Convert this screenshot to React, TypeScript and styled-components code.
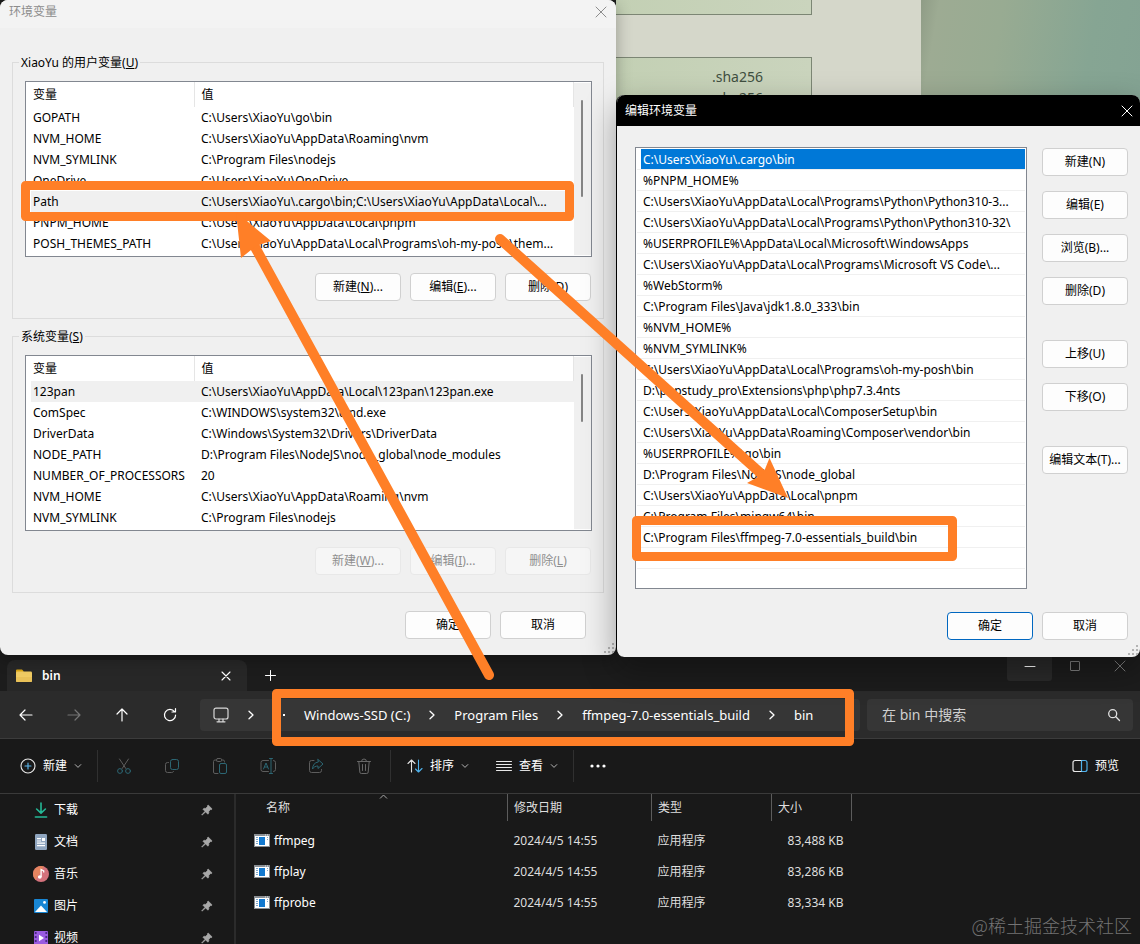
import React from "react";
import styled, { createGlobalStyle, css } from "styled-components";

const GlobalStyle = createGlobalStyle`
  *, *::before, *::after { box-sizing: border-box; }
  body {
    margin: 0;
    background: #191919;
    font-family: "Noto Sans", "Noto Sans CJK SC", sans-serif;
    font-size: 12px;
    line-height: 16px;
    color: #000;
  }
  button, input, legend, table { font: inherit; }
`;

const Desktop = styled.div`
  position: relative;
  display: flex;
  flex-direction: column;
  height: 100vh;
  overflow: hidden;
  background: #1c1c1c;
`;

const Workspace = styled.div`
  flex: none;
  display: grid;
  grid-template-columns: minmax(0, 616fr) minmax(0, 524fr);
  align-items: start;
`;

/* ---------- dialogs ---------- */

const Dialog = styled.section`
  display: flex;
  flex-direction: column;
  border-radius: 8px;
  background: #f0f0f0;
`;

const VariablesDialog = styled(Dialog)`
  position: relative;
  z-index: 1;
  box-shadow: 0 4px 16px rgba(0, 0, 0, 0.3);
`;

const EditDialog = styled(Dialog)`
  position: relative;
  z-index: 2;
  margin-top: -8px;
  border-left: 1px solid #000;
  box-shadow: 0 12px 32px rgba(0, 0, 0, 0.35);
`;

const TitleBar = styled.header<{ $dark?: boolean }>`
  display: flex;
  align-items: center;
  justify-content: space-between;
  border-radius: 8px 8px 0 0;
  ${(p) =>
    p.$dark
      ? css`
          height: 31px;
          padding: 0 7px 0 8px;
          background: #000;
          color: #fff;
        `
      : css`
          height: 28px;
          padding: 0 9px 4px;
          background: #f3f3f3;
          color: #8c8c8c;
        `}
`;

const DialogTitle = styled.h2`
  margin: 0;
  font-size: 12px;
  font-weight: 400;
  line-height: 16px;
`;

const PlainButton = styled.button`
  display: flex;
  align-items: center;
  justify-content: center;
  padding: 0;
  border: 0;
  background: none;
  color: inherit;
`;

const VariablesBody = styled.div`
  display: flex;
  flex-direction: column;
  gap: 9px;
  padding: 26px 12px 0;
`;

const Group = styled.fieldset`
  min-width: 0;
  margin: 0;
  padding: 10px 11px 17px 12px;
  border: 1px solid #dcdcdc;
`;

const GroupLabel = styled.legend`
  margin-left: -6px;
  padding: 1px 2px 0;
  line-height: 16px;
`;

const ListFrame = styled.div`
  display: flex;
  height: 176px;
  padding-left: 5px;
  border: 1px solid #828790;
  background: #fff;
  overflow: hidden;
`;

const VariableTable = styled.table`
  flex: 1;
  min-width: 0;
  align-self: flex-start;
  table-layout: fixed;
  border-collapse: collapse;

  th, td {
    padding: 0 0 0 2px;
    font-weight: 400;
    text-align: left;
    white-space: nowrap;
    overflow: hidden;
  }
  th { height: 25px; border-right: 1px solid #e5e5e5; }
  td { height: 21px; }
  th:first-child { width: 163px; }
  th + th, td + td { padding-left: 7px; }
`;

const VariableRow = styled.tr<{ $selected?: boolean }>`
  background: ${(p) => (p.$selected ? "#f0f0f0" : "transparent")};
`;

const ScrollTrack = styled.div`
  flex: none;
  width: 17px;
  margin: 1px 0;
  padding: 17px 7px;
  background: #f0f0f0;
`;

const ScrollThumb = styled.div<{ $length: number }>`
  width: 2px;
  height: ${(p) => p.$length}px;
  border-radius: 1px;
  background: #858585;
`;

const ButtonRow = styled.div`
  display: flex;
  justify-content: flex-end;
  gap: 9px;
  margin-top: 16px;
  padding-right: 1px;
`;

const DialogFooter = styled.footer<{ $inset: number }>`
  display: flex;
  justify-content: flex-end;
  gap: 9px;
  padding: 18px ${(p) => p.$inset}px 16px;
`;

const EditFooter = styled(DialogFooter)`
  padding-top: 23px;
  padding-bottom: 17px;
`;

const PushButton = styled.button<{ $primary?: boolean; $apart?: boolean }>`
  flex: none;
  width: 86px;
  height: 28px;
  margin-top: ${(p) => (p.$apart ? 20 : 0)}px;
  padding: 0;
  border: 1px solid ${(p) => (p.$primary ? "#0067c0" : "#d0d0d0")};
  border-radius: 4px;
  background: #fdfdfd;
  color: #000;
  white-space: nowrap;

  &:disabled {
    border-color: #e8e8e8;
    background: #f6f6f6;
    color: #8f8f8f;
  }
`;

const Grip = styled.svg`
  position: absolute;
  right: 2px;
  bottom: 2px;
`;

const EditBody = styled.div`
  display: flex;
  align-items: flex-start;
  gap: 15px;
  padding: 21px 12px 0 18px;
`;

const PathList = styled.ul`
  flex: 1;
  min-width: 0;
  height: 442px;
  margin: 0;
  padding: 1px;
  border: 1px solid #828790;
  background: #fff;
  list-style: none;
`;

const PathItem = styled.li<{ $selected?: boolean }>`
  height: 21px;
  padding-left: 4px;
  border-bottom: 1px solid #f0f0f0;
  line-height: 22px;
  white-space: nowrap;

  span {
    display: block;
    height: 20px;
    padding-left: 2px;
    background: ${(p) => (p.$selected ? "#0078d7" : "transparent")};
    color: ${(p) => (p.$selected ? "#fff" : "#000")};
  }
`;

const SideButtons = styled.div`
  display: flex;
  flex-direction: column;
  gap: 15px;
  padding-top: 1px;
`;

/* ---------- page behind the dialogs ---------- */

const Behind = styled.div`
  display: flex;
  height: 103px;
`;

const WebPage = styled.div`
  width: 305px;
  overflow: hidden;
  background: #d5d7ca;
`;

const Wallpaper = styled.div`
  flex: 1;
  background: linear-gradient(100deg, #8f9c86 0, #9dab93 8%, #98ab92 35%, #86a593 75%, #84a393 100%);
`;

const PagePanel = styled.div<{ $first?: boolean }>`
  width: 196px;
  height: ${(p) => (p.$first ? 15 : 60)}px;
  margin-bottom: 42px;
  padding: ${(p) => (p.$first ? 0 : 8)}px 48px 0;
  border: 1px solid #7c8674;
  border-width: ${(p) => (p.$first ? "0 1px 1px 0" : "1px 1px 0 0")};
  background: linear-gradient(90deg, #c3d0b4, #cad4bd);
  color: #3f4f40;
  font-size: 14px;
  line-height: 21px;
  text-align: right;
`;

/* ---------- file explorer ---------- */

const Explorer = styled.section`
  flex: 1;
  min-height: 240px;
  display: flex;
  flex-direction: column;
  color: #fff;
`;

const TabStrip = styled.header`
  flex: none;
  display: flex;
  align-items: flex-end;
  height: 34px;
  padding-left: 7px;
`;

const Tab = styled.div`
  display: flex;
  align-items: center;
  width: 240px;
  height: 31px;
  padding: 0 16px 0 9px;
  border-radius: 8px 8px 0 0;
  background: #272727;
  font-weight: 600;

  span { flex: 1; padding-left: 10px; }
`;

const NewTab = styled(PlainButton)`
  width: 46px;
  height: 31px;
`;

const WindowControls = styled.div`
  display: flex;
  align-self: flex-start;
  margin-left: auto;
  margin-right: -2px;
`;

const WindowButton = styled(PlainButton)<{ $active?: boolean }>`
  width: 45px;
  height: 24px;
  padding-bottom: 6px;
  border-radius: 0 0 3px 3px;
  background: ${(p) => (p.$active ? "#2a2a2a" : "transparent")};
  color: ${(p) => (p.$active ? "#fff" : "#7d7d7d")};
`;

const NavBar = styled.div`
  flex: none;
  display: flex;
  align-items: center;
  height: 48px;
  padding: 0 7px 0 2px;
  border-bottom: 1px solid #3c3c3c;
  background: #2b2b2b;
`;

const NavButtons = styled.div`
  flex: none;
  display: flex;
  width: 198px;
`;

const NavButton = styled(PlainButton)`
  width: 48px;
  height: 32px;

  &:disabled { color: #757575; }
`;

const Address = styled.nav`
  flex: 1;
  min-width: 0;
  display: flex;
  align-items: center;
  gap: 17px;
  height: 32px;
  margin-right: 7px;
  padding-left: 13px;
  border-radius: 4px;
  background: #363636;
  font-size: 13px;
`;

const Crumb = styled(PlainButton)`
  white-space: nowrap;
`;

const SearchBox = styled.label`
  flex: none;
  display: flex;
  align-items: center;
  width: 266px;
  height: 32px;
  padding: 0 12px 0 15px;
  border-radius: 4px;
  background: #363636;
`;

const SearchInput = styled.input`
  flex: 1;
  min-width: 0;
  padding: 0;
  border: 0;
  outline: 0;
  background: none;
  color: #fff;
  font-size: 14px;

  &::placeholder { color: #cfcfcf; opacity: 1; }
`;

const CommandBar = styled.div`
  flex: none;
  display: flex;
  align-items: center;
  height: 55px;
  padding: 0 21px 0 20px;
  border-bottom: 1px solid #3a3a3a;
  background: #191919;
`;

const Command = styled(PlainButton)<{ $width?: number; $end?: boolean }>`
  flex: none;
  justify-content: flex-start;
  gap: 7px;
  width: ${(p) => (p.$width ? p.$width + "px" : "auto")};
  height: 32px;
  margin-left: ${(p) => (p.$end ? "auto" : 0)};
  white-space: nowrap;
`;

const IconCommand = styled(PlainButton)`
  flex: none;
  width: 48px;
  height: 32px;
`;

const Divider = styled.div<{ $before?: number; $after?: number }>`
  flex: none;
  width: 1px;
  height: 32px;
  margin: 0 ${(p) => p.$after ?? 0}px 0 ${(p) => p.$before ?? 0}px;
  background: #303030;
`;

const ExplorerBody = styled.div`
  flex: 1;
  min-height: 0;
  display: flex;
  overflow: hidden;
  background: #191919;
`;

const Sidebar = styled.nav`
  flex: none;
  width: 236px;
  border-right: 2px solid #2b2b2b;
`;

const Place = styled.a`
  display: flex;
  align-items: center;
  height: 32px;
  padding: 0 21px 0 33px;
  color: #fff;
  text-decoration: none;

  span { flex: 1; padding-left: 5px; }
`;

const Files = styled.div`
  position: relative;
  flex: 1;
  min-width: 0;
`;

const SortCaret = styled.svg`
  position: absolute;
  top: 0;
  left: 143px;
`;

const FileTable = styled.table`
  width: 616px;
  table-layout: fixed;
  border-collapse: collapse;

  th, td {
    padding: 0 0 0 6px;
    font-weight: 400;
    text-align: left;
    white-space: nowrap;
    color: #dedede;
  }
  th { height: 27px; border-right: 1px solid #5c5c5c; }
  td { height: 31px; }
  th:nth-child(2) { width: 144px; }
  th:nth-child(3) { width: 120px; }
  th:nth-child(4) { width: 80px; }
  td:last-child { padding-right: 8px; text-align: right; }
  th:first-child { padding-left: 30px; }
  td:first-child { padding-left: 18px; }
  tbody::before { content: ""; display: block; height: 4px; }
`;

const FileName = styled.span`
  display: flex;
  align-items: center;
  gap: 4px;
  color: #fff;
`;

/* ---------- overlays ---------- */

const Markup = styled.svg`
  position: absolute;
  top: 0;
  left: 0;
  z-index: 3;
  pointer-events: none;
`;

const Watermark = styled.div`
  position: absolute;
  right: 8px;
  bottom: 7px;
  z-index: 3;
  color: #747474;
  font-family: "Noto Sans CJK SC", sans-serif;
  font-size: 18px;
  font-weight: 300;
  line-height: 24px;
`;

/* ---------- icons ---------- */

type StrokeProps = { size?: number; w?: number; color?: string; children: React.ReactNode };

const Stroke = ({ size = 16, w = 1, color = "currentColor", children }: StrokeProps) => (
  <svg width={size} height={size} viewBox={`0 0 ${size} ${size}`} fill="none" stroke={color} strokeWidth={w} strokeLinecap="round" strokeLinejoin="round" aria-hidden="true">
    {children}
  </svg>
);

const CloseIcon = () => <Stroke size={12}><path d="M1 1l10 10M11 1L1 11" /></Stroke>;
const ChevronRight = () => <Stroke size={10} w={1.3}><path d="M3 1.2L7 5 3 8.8" /></Stroke>;
const ChevronDown = () => <Stroke size={8} color="#b5b5b5"><path d="M1.2 2.6L4 5.4l2.8-2.8" /></Stroke>;

const FolderIcon = () => (
  <svg width="16" height="16" viewBox="0 0 16 16" aria-hidden="true">
    <path d="M0 2.5A1 1 0 0 1 1 1.5h5l1.500 1.500v4H0z" fill="#d9a514" />
    <rect y="3.5" width="16" height="10.500" rx="1.2" fill="#f0cb63" />
    <path d="M0 9h16v3.800a1.2 1.2 0 0 1-1.2 1.2H1.2A1.2 1.2 0 0 1 0 12.800z" fill="#e9c158" />
  </svg>
);

const MonitorIcon = () => (
  <Stroke w={1.2} color="#d8d8d8">
    <rect x="1" y="1.2" width="14" height="10.8" rx="2" />
    <path d="M6 12v2.6M10 12v2.6M4 14.8h8" />
  </Stroke>
);

const AppIcon = () => (
  <svg width="16" height="13" viewBox="0 0 16 13" aria-hidden="true">
    <rect width="16" height="13" fill="#8a8f94" />
    <rect x="1" y="2" width="14" height="10" fill="#fff" />
    <rect x="5" y="3" width="6" height="8" fill="#1379cf" />
    <path d="M2 3.5h2M2 5.5h2M2 7.5h2M2 9.5h2M13 3.5h1M13 5.5h1" stroke="#7fa6c9" />
    <path d="M11 1h1M13 1h1" stroke="#e6e6e6" />
  </svg>
);

const PinIcon = () => (
  <svg width="12" height="12" viewBox="0 0 12 12" aria-hidden="true">
    <path d="M7.2 1l3.9 3.9-1 .9-.6-.2-1.8 1.8c.3 1.1 0 2-.8 2.8L4.6 7.9 1 11.2l-.3-.3L4 7.3 1.9 5.2c.8-.8 1.7-1.1 2.8-.8l1.8-1.8-.2-.7z" fill="#a8a8a8" stroke="#a8a8a8" strokeWidth=".7" strokeLinejoin="round" />
  </svg>
);

const placeIcons: Record<string, React.ReactNode> = {
  下载: (
    <g fill="none" stroke="#25b896" strokeWidth="1.6" strokeLinecap="round" strokeLinejoin="round">
      <path d="M8 1v10M3.6 7L8 11.2 12.4 7M2.4 15h11.2" />
    </g>
  ),
  文档: (
    <>
      <rect x="2" width="12" height="16" rx="1.2" fill="#8fa5bf" />
      <path d="M4 4.6h4M4 7h4M4 9.2h8M4 11.6h8" stroke="#fff" strokeWidth="1.2" />
      <rect x="9" y="4" width="3" height="3" fill="#fff" />
    </>
  ),
  音乐: (
    <>
      <circle cx="8" cy="8" r="8" fill="#d4727c" />
      <path d="M0 8a8 8 0 0 1 11-7.4L2.6 13.9A8 8 0 0 1 0 8z" fill="#e5845f" />
      <ellipse cx="6.8" cy="11" rx="1.9" ry="1.7" fill="#fff" />
      <path d="M8.1 11V3.5l2.600 1.300v1.700" fill="none" stroke="#fff" strokeWidth="1.3" />
    </>
  ),
  图片: (
    <>
      <rect x="1" y="1" width="14" height="14" rx="1" fill="#1886d4" />
      <path d="M2 14l6-6.5 6 6.5z" fill="#fff" />
      <circle cx="11.5" cy="4.4" r="1.4" fill="#fff" />
    </>
  ),
  视频: (
    <>
      <rect x="1" y="1" width="14" height="14" rx="1" fill="#9a5be0" />
      <path d="M2.7 2v12M13.3 2v12" stroke="#4b2a86" strokeWidth="1.8" strokeDasharray="2 2" />
      <path d="M6 4.8l5 3.2-5 3.2z" fill="#fff" />
    </>
  ),
};

const GripDots = () => (
  <Grip width="10" height="10" viewBox="0 0 10 10" fill="#b4b4b4" aria-hidden="true">
    <path d="M8 0h2v2H8zM8 4h2v2H8zM8 8h2v2H8zM4 4h2v2H4zM4 8h2v2H4zM0 8h2v2H0z" />
  </Grip>
);

/* ---------- data ---------- */

type Variable = { name: string; value: string; selected?: boolean };

const userVariables: Variable[] = [
  { name: "GOPATH", value: "C:\\Users\\XiaoYu\\go\\bin" },
  { name: "NVM_HOME", value: "C:\\Users\\XiaoYu\\AppData\\Roaming\\nvm" },
  { name: "NVM_SYMLINK", value: "C:\\Program Files\\nodejs" },
  { name: "OneDrive", value: "C:\\Users\\XiaoYu\\OneDrive" },
  { name: "Path", value: "C:\\Users\\XiaoYu\\.cargo\\bin;C:\\Users\\XiaoYu\\AppData\\Local\\...", selected: true },
  { name: "PNPM_HOME", value: "C:\\Users\\XiaoYu\\AppData\\Local\\pnpm" },
  { name: "POSH_THEMES_PATH", value: "C:\\Users\\XiaoYu\\AppData\\Local\\Programs\\oh-my-posh\\them..." },
];

const systemVariables: Variable[] = [
  { name: "123pan", value: "C:\\Users\\XiaoYu\\AppData\\Local\\123pan\\123pan.exe", selected: true },
  { name: "ComSpec", value: "C:\\WINDOWS\\system32\\cmd.exe" },
  { name: "DriverData", value: "C:\\Windows\\System32\\Drivers\\DriverData" },
  { name: "NODE_PATH", value: "D:\\Program Files\\NodeJS\\node_global\\node_modules" },
  { name: "NUMBER_OF_PROCESSORS", value: "20" },
  { name: "NVM_HOME", value: "C:\\Users\\XiaoYu\\AppData\\Roaming\\nvm" },
  { name: "NVM_SYMLINK", value: "C:\\Program Files\\nodejs" },
];

const paths = [
  "C:\\Users\\XiaoYu\\.cargo\\bin",
  "%PNPM_HOME%",
  "C:\\Users\\XiaoYu\\AppData\\Local\\Programs\\Python\\Python310-3...",
  "C:\\Users\\XiaoYu\\AppData\\Local\\Programs\\Python\\Python310-32\\",
  "%USERPROFILE%\\AppData\\Local\\Microsoft\\WindowsApps",
  "C:\\Users\\XiaoYu\\AppData\\Local\\Programs\\Microsoft VS Code\\...",
  "%WebStorm%",
  "C:\\Program Files\\Java\\jdk1.8.0_333\\bin",
  "%NVM_HOME%",
  "%NVM_SYMLINK%",
  "C:\\Users\\XiaoYu\\AppData\\Local\\Programs\\oh-my-posh\\bin",
  "D:\\phpstudy_pro\\Extensions\\php\\php7.3.4nts",
  "C:\\Users\\XiaoYu\\AppData\\Local\\ComposerSetup\\bin",
  "C:\\Users\\XiaoYu\\AppData\\Roaming\\Composer\\vendor\\bin",
  "%USERPROFILE%\\go\\bin",
  "D:\\Program Files\\NodeJS\\node_global",
  "C:\\Users\\XiaoYu\\AppData\\Local\\pnpm",
  "C:\\Program Files\\mingw64\\bin",
  "C:\\Program Files\\ffmpeg-7.0-essentials_build\\bin",
  "",
];

const crumbs = ["Windows-SSD (C:)", "Program Files", "ffmpeg-7.0-essentials_build", "bin"];

const files = [
  { name: "ffmpeg", size: "83,488 KB" },
  { name: "ffplay", size: "83,286 KB" },
  { name: "ffprobe", size: "83,334 KB" },
];

/* ---------- parts ---------- */

function VariableList({ rows, thumb }: { rows: Variable[]; thumb: number }) {
  return (
    <ListFrame>
      <VariableTable>
        <thead>
          <tr><th>变量</th><th>值</th></tr>
        </thead>
        <tbody>
          {rows.map((v) => (
            <VariableRow key={v.name} $selected={v.selected}>
              <td>{v.name}</td>
              <td>{v.value}</td>
            </VariableRow>
          ))}
        </tbody>
      </VariableTable>
      <ScrollTrack><ScrollThumb $length={thumb} /></ScrollTrack>
    </ListFrame>
  );
}

function EnvironmentVariables() {
  return (
    <VariablesDialog aria-label="环境变量">
      <TitleBar>
        <DialogTitle>环境变量</DialogTitle>
        <PlainButton aria-label="关闭"><CloseIcon /></PlainButton>
      </TitleBar>
      <VariablesBody>
        <Group>
          <GroupLabel>XiaoYu 的用户变量(<u>U</u>)</GroupLabel>
          <VariableList rows={userVariables} thumb={97} />
          <ButtonRow>
            <PushButton>新建(<u>N</u>)...</PushButton>
            <PushButton>编辑(<u>E</u>)...</PushButton>
            <PushButton>删除(<u>D</u>)</PushButton>
          </ButtonRow>
        </Group>
        <Group>
          <GroupLabel>系统变量(<u>S</u>)</GroupLabel>
          <VariableList rows={systemVariables} thumb={48} />
          <ButtonRow>
            <PushButton disabled>新建(<u>W</u>)...</PushButton>
            <PushButton disabled>编辑(<u>I</u>)...</PushButton>
            <PushButton disabled>删除(<u>L</u>)</PushButton>
          </ButtonRow>
        </Group>
      </VariablesBody>
      <DialogFooter $inset={30}>
        <PushButton>确定</PushButton>
        <PushButton>取消</PushButton>
      </DialogFooter>
      <GripDots />
    </VariablesDialog>
  );
}

function EditVariable() {
  return (
    <EditDialog aria-label="编辑环境变量">
      <TitleBar $dark>
        <DialogTitle>编辑环境变量</DialogTitle>
        <PlainButton aria-label="关闭"><CloseIcon /></PlainButton>
      </TitleBar>
      <EditBody>
        <PathList>
          {paths.map((path, i) => (
            <PathItem key={i} $selected={i === 0}><span>{path}</span></PathItem>
          ))}
        </PathList>
        <SideButtons>
          <PushButton>新建(N)</PushButton>
          <PushButton>编辑(E)</PushButton>
          <PushButton>浏览(B)...</PushButton>
          <PushButton>删除(D)</PushButton>
          <PushButton $apart>上移(U)</PushButton>
          <PushButton>下移(O)</PushButton>
          <PushButton $apart>编辑文本(T)...</PushButton>
        </SideButtons>
      </EditBody>
      <EditFooter $inset={12}>
        <PushButton $primary>确定</PushButton>
        <PushButton>取消</PushButton>
      </EditFooter>
      <GripDots />
    </EditDialog>
  );
}

const dim = "#5d5d5d";
const teal = "#2c6673";

function FileExplorer() {
  return (
    <Explorer aria-label="bin">
      <TabStrip>
        <Tab>
          <FolderIcon />
          <span>bin</span>
          <PlainButton aria-label="关闭标签页"><Stroke size={10} w={1.1}><path d="M1 1l8 8M9 1L1 9" /></Stroke></PlainButton>
        </Tab>
        <NewTab aria-label="新建标签页"><Stroke size={11}><path d="M5.5 .5v10M.5 5.5h10" /></Stroke></NewTab>
        <WindowControls>
          <WindowButton $active aria-label="最小化"><Stroke size={12}><path d="M1 6.500h10" /></Stroke></WindowButton>
          <WindowButton aria-label="最大化"><Stroke size={12}><rect x="1.500" y="1.500" width="9" height="9" rx=".5" /></Stroke></WindowButton>
          <WindowButton aria-label="关闭"><CloseIcon /></WindowButton>
        </WindowControls>
      </TabStrip>

      <NavBar>
        <NavButtons>
          <NavButton aria-label="后退"><Stroke w={1.2}><path d="M14 8H2M7 3L2 8l5 5" /></Stroke></NavButton>
          <NavButton aria-label="前进" disabled><Stroke w={1.2}><path d="M2 8h12M9 3l5 5-5 5" /></Stroke></NavButton>
          <NavButton aria-label="上移一级"><Stroke w={1.2}><path d="M8 14V2M3 7l5-5 5 5" /></Stroke></NavButton>
          <NavButton aria-label="刷新"><Stroke w={1.2}><path d="M13.600 8A5.600 5.600 0 1 1 12.500 4.700M13.500 1.600V5H10" /></Stroke></NavButton>
        </NavButtons>
        <Address aria-label="地址">
          <MonitorIcon />
          <ChevronRight />
          <svg width="14" height="4" viewBox="0 0 14 4" fill="#fff" aria-hidden="true">
            <path d="M1 1h2v2H1zM5 1h2v2H5zM10 1h2v2h-2z" />
          </svg>
          {crumbs.map((c, i) => (
            <React.Fragment key={c}>
              {i > 0 && <ChevronRight />}
              <Crumb>{c}</Crumb>
            </React.Fragment>
          ))}
        </Address>
        <SearchBox>
          <SearchInput placeholder="在 bin 中搜索" aria-label="在 bin 中搜索" />
          <Stroke size={14} w={1.3} color="#e2e2e2"><circle cx="5.700" cy="5.700" r="4" /><path d="M8.800 8.800L12.500 12.500" /></Stroke>
        </SearchBox>
      </NavBar>

      <CommandBar>
        <Command $width={77}>
          <Stroke w={1.100} color="#e8e8e8"><circle cx="8" cy="8" r="7" /><path d="M8 5v6M5 8h6" stroke="#5cb8ee" /></Stroke>
          新建
          <ChevronDown />
        </Command>
        <Divider $after={2} />
        <IconCommand aria-label="剪切" disabled>
          <Stroke color={dim}><path d="M3.500 1l6.300 9.500M12.500 1L6.200 10.500" /><g stroke={teal}><circle cx="4" cy="13" r="2.400" /><circle cx="12" cy="13" r="2.400" /></g></Stroke>
        </IconCommand>
        <IconCommand aria-label="复制" disabled>
          <Stroke color={teal}><rect x="6.500" y="1.500" width="8" height="10" rx="2" /><path d="M4.500 4.500H3.500a2 2 0 0 0-2 2v6a2 2 0 0 0 2 2h4a2 2 0 0 0 2-1" stroke={dim} /></Stroke>
        </IconCommand>
        <IconCommand aria-label="粘贴" disabled>
          <Stroke color={dim}><path d="M5 2H3a1.500 1.500 0 0 0-1.500 1.500V14A1.500 1.500 0 0 0 3 15.500h3M9.500 2h1.500a1.500 1.500 0 0 1 1.500 1.500V4" /><rect x="4.500" y=".5" width="5" height="3" rx="1" /><rect x="7.500" y="5.500" width="7" height="10" rx="1.500" stroke={teal} /></Stroke>
        </IconCommand>
        <IconCommand aria-label="重命名" disabled>
          <Stroke color={dim}><path d="M8.500 2.500H3a2 2 0 0 0-2 2v7a2 2 0 0 0 2 2h5.500M13.500 2.500a2 2 0 0 1 2 2v7a2 2 0 0 1-2 2" /><path d="M3.500 11L6 5l2.500 6M4.400 9h3.200M11 .5v15M9.500 .5h3M9.500 15.500h3" stroke={teal} /></Stroke>
        </IconCommand>
        <IconCommand aria-label="共享" disabled>
          <Stroke color={dim}><path d="M6 2.500H3.500a2 2 0 0 0-2 2v8a2 2 0 0 0 2 2h8a2 2 0 0 0 2-2V11.500" /><path d="M10 1.500l5 4.500-5 4.500V8c-2.500 0-4.300 1-5.500 3C4.800 7 6.500 4.500 10 4z" stroke={teal} /></Stroke>
        </IconCommand>
        <IconCommand aria-label="删除" disabled>
          <Stroke color="#686868"><path d="M1.500 3.500h13M5.500 3.500a2.500 2.500 0 0 1 5 0M2.800 3.500l1 10.500a1.500 1.500 0 0 0 1.500 1.500h5.400a1.500 1.500 0 0 0 1.500-1.500l1-10.500M6.500 6.500v6M9.500 6.500v6" /></Stroke>
        </IconCommand>
        <Divider $before={2} $after={16} />
        <Command $width={89}>
          <Stroke w={1.100} color="#e0e0e0"><path d="M4.500 14V2M1 5.500L4.500 2 8 5.500" /><path d="M11.500 2v12M8.500 11l3 3 3.500-3.500" stroke="#4fb2ec" /></Stroke>
          排序
          <ChevronDown />
        </Command>
        <Command $width={77}>
          <Stroke color="#e8e8e8"><path d="M.5 3.500h15M.5 6.500h15M.5 9.500h15M.5 12.500h15" /></Stroke>
          查看
          <ChevronDown />
        </Command>
        <Divider />
        <IconCommand aria-label="更多">
          <svg width="16" height="4" viewBox="0 0 16 4" fill="#fff" aria-hidden="true"><circle cx="2" cy="2" r="1.600" /><circle cx="8" cy="2" r="1.600" /><circle cx="14" cy="2" r="1.600" /></svg>
        </IconCommand>
        <Command $end>
          <Stroke w={1.200} color="#4fb2ec"><path d="M9.500 2.500H13a2 2 0 0 1 2 2v7a2 2 0 0 1-2 2H9.500z" /><path d="M9 2.500H3a2 2 0 0 0-2 2v7a2 2 0 0 0 2 2h6" stroke="#e8e8e8" /></Stroke>
          预览
        </Command>
      </CommandBar>

      <ExplorerBody>
        <Sidebar aria-label="快速访问">
          {Object.keys(placeIcons).map((name) => (
            <Place key={name} href="#">
              <svg width="16" height="16" viewBox="0 0 16 16" aria-hidden="true">{placeIcons[name]}</svg>
              <span>{name}</span>
              <PinIcon />
            </Place>
          ))}
        </Sidebar>
        <Files>
          <SortCaret width="9" height="5" viewBox="0 0 9 5" fill="none" stroke="#a8a8a8" aria-hidden="true"><path d="M1 4.500L4.500 1 8 4.500" /></SortCaret>
          <FileTable>
            <thead>
              <tr><th>名称</th><th>修改日期</th><th>类型</th><th>大小</th></tr>
            </thead>
            <tbody>
              {files.map((f) => (
                <tr key={f.name}>
                  <td><FileName><AppIcon />{f.name}</FileName></td>
                  <td>2024/4/5 14:55</td>
                  <td>应用程序</td>
                  <td>{f.size}</td>
                </tr>
              ))}
            </tbody>
          </FileTable>
        </Files>
      </ExplorerBody>
    </Explorer>
  );
}

export default function App() {
  return (
    <>
      <GlobalStyle />
      <Desktop>
        <Workspace>
          <EnvironmentVariables />
          <div>
            <Behind>
              <WebPage>
                <PagePanel $first />
                <PagePanel>.sha256<br />.sha256</PagePanel>
              </WebPage>
              <Wallpaper />
            </Behind>
            <EditVariable />
          </div>
        </Workspace>
        <FileExplorer />
        <Markup width="1140" height="944" viewBox="0 0 1140 944" aria-hidden="true">
          <g fill="none" stroke="#ff7f27" strokeWidth="9" strokeLinejoin="round" strokeLinecap="round">
            <rect x="25.500" y="185.500" width="544" height="31" />
            <rect x="636.500" y="520.500" width="316" height="36" />
            <rect x="276.500" y="693.500" width="573" height="48" />
            <path d="M489 675L255 247M500 239L766 478" strokeWidth="10" />
          </g>
          <g fill="#ff7f27">
            <path d="M236 212L271 241L256 246L241 258z" />
            <path d="M788 498L769.500 458L763 474L747 483z" />
          </g>
        </Markup>
        <Watermark>@稀土掘金技术社区</Watermark>
      </Desktop>
    </>
  );
}
